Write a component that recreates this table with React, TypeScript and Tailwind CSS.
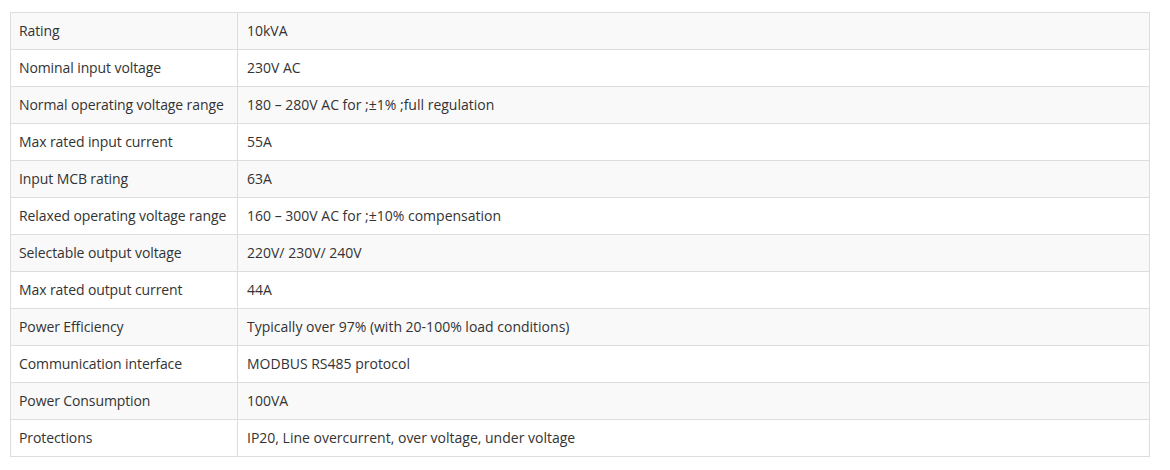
import React from "react";

const rows: [string, string][] = [
  ["Rating", "10kVA"],
  ["Nominal input voltage", "230V AC"],
  ["Normal operating voltage range", "180 – 280V AC for ;±1% ;full regulation"],
  ["Max rated input current", "55A"],
  ["Input MCB rating", "63A"],
  ["Relaxed operating voltage range", "160 – 300V AC for ;±10% compensation"],
  ["Selectable output voltage", "220V/ 230V/ 240V"],
  ["Max rated output current", "44A"],
  ["Power Efficiency", "Typically over 97% (with 20-100% load conditions)"],
  ["Communication interface", "MODBUS RS485 protocol"],
  ["Power Consumption", "100VA"],
  ["Protections", "IP20, Line overcurrent, over voltage, under voltage"],
];

export default function App() {
  return (
    <div className="w-[1170px] h-[470px] bg-white pt-3 pl-[10px]" style={{ fontFamily: '"Open Sans", sans-serif' }}>
      <table className="table-fixed w-[1140px] border-collapse border border-[#dddddd] text-[14px] leading-[20px] text-[#333333]">
        <colgroup>
          <col className="w-[227px]" />
          <col />
        </colgroup>
        <tbody>
          {rows.map(([a, b], i) => (
            <tr key={i} className={i % 2 === 0 ? "bg-[#f9f9f9]" : "bg-white"}>
              <td className="border border-[#dddddd] px-2 py-2 align-top whitespace-nowrap tracking-[-0.1px]">{a}</td>
              <td className="border border-[#dddddd] px-[9px] py-2 align-top whitespace-nowrap">{b}</td>
            </tr>
          ))}
        </tbody>
      </table>
    </div>
  );
}
